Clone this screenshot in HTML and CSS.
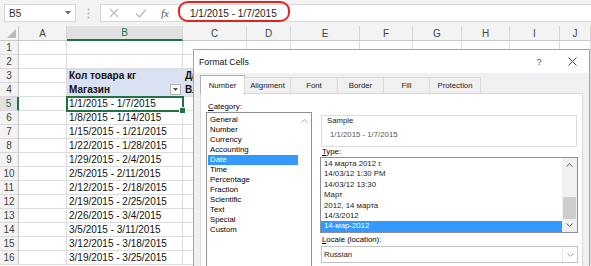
FILE: index.html
```html
<!DOCTYPE html>
<html>
<head>
<meta charset="utf-8">
<link rel="stylesheet" href="styles.css">
</head>
<body>
<div class="fbar">
  <div class="namebox"><span>B5</span><svg class="nb-arrow" width="6" height="4" viewBox="0 0 6 4"><polygon points="0,0 6,0 3,3.5" fill="#666"/></svg></div>
  <div class="vdots"><svg width="3" height="11" viewBox="0 0 3 11"><circle cx="1.5" cy="1.5" r="1" fill="#b4b4b4"/><circle cx="1.5" cy="5.5" r="1" fill="#b4b4b4"/><circle cx="1.5" cy="9.5" r="1" fill="#b4b4b4"/></svg></div>
  <div class="fbox">
    <div class="ficons">
      <svg width="56" height="16" viewBox="0 0 56 16"><path d="M9 4 L17 12 M17 4 L9 12" stroke="#bdbdbd" stroke-width="1.2" fill="none"/><path d="M35 8.5 L38.5 12 L45 4.5" stroke="#bdbdbd" stroke-width="1.2" fill="none"/></svg>
      <span class="fx">fx</span>
    </div>
    <div class="ftext">1/1/2015 - 1/7/2015</div>
  </div>
</div>
<div class="ring"></div>

<div class="sheet">
  <div class="corner"><svg width="9" height="9" viewBox="0 0 9 9"><polygon points="9,0 9,9 0,9" fill="#b9b9b9"/></svg></div>
  <div class="ch">A</div><div class="ch sel">B</div><div class="ch">C</div><div class="ch">D</div><div class="ch">E</div><div class="ch">F</div><div class="ch">G</div><div class="ch">H</div><div class="ch">I</div><div class="ch">J</div>

  <div class="rh">1</div><div class="c"></div><div class="c"></div><div class="c"></div><div class="c"></div><div class="c"></div><div class="c"></div><div class="c"></div><div class="c"></div><div class="c"></div><div class="c"></div>
  <div class="rh">2</div><div class="c"></div><div class="c"></div><div class="c"></div><div class="c"></div><div class="c"></div><div class="c"></div><div class="c"></div><div class="c"></div><div class="c"></div><div class="c"></div>
  <div class="rh">3</div><div class="c"></div><div class="c pv pv-top">Кол товара кг</div><div class="c pv pv-top">Дата</div><div class="c"></div><div class="c"></div><div class="c"></div><div class="c"></div><div class="c"></div><div class="c"></div><div class="c"></div>
  <div class="rh">4</div><div class="c"></div><div class="c pv">Магазин<span class="filter"><svg width="5" height="3" viewBox="0 0 5 3"><polygon points="0,0 5,0 2.5,3" fill="#555"/></svg></span></div><div class="c pv">Вл</div><div class="c"></div><div class="c"></div><div class="c"></div><div class="c"></div><div class="c"></div><div class="c"></div><div class="c"></div>
  <div class="rh sel">5</div><div class="c"></div><div class="c active">1/1/2015 - 1/7/2015</div><div class="c"></div><div class="c"></div><div class="c"></div><div class="c"></div><div class="c"></div><div class="c"></div><div class="c"></div><div class="c"></div>
  <div class="rh">6</div><div class="c"></div><div class="c">1/8/2015 - 1/14/2015</div><div class="c"></div><div class="c"></div><div class="c"></div><div class="c"></div><div class="c"></div><div class="c"></div><div class="c"></div><div class="c"></div>
  <div class="rh">7</div><div class="c"></div><div class="c">1/15/2015 - 1/21/2015</div><div class="c"></div><div class="c"></div><div class="c"></div><div class="c"></div><div class="c"></div><div class="c"></div><div class="c"></div><div class="c"></div>
  <div class="rh">8</div><div class="c"></div><div class="c">1/22/2015 - 1/28/2015</div><div class="c"></div><div class="c"></div><div class="c"></div><div class="c"></div><div class="c"></div><div class="c"></div><div class="c"></div><div class="c"></div>
  <div class="rh">9</div><div class="c"></div><div class="c">1/29/2015 - 2/4/2015</div><div class="c"></div><div class="c"></div><div class="c"></div><div class="c"></div><div class="c"></div><div class="c"></div><div class="c"></div><div class="c"></div>
  <div class="rh">10</div><div class="c"></div><div class="c">2/5/2015 - 2/11/2015</div><div class="c"></div><div class="c"></div><div class="c"></div><div class="c"></div><div class="c"></div><div class="c"></div><div class="c"></div><div class="c"></div>
  <div class="rh">11</div><div class="c"></div><div class="c">2/12/2015 - 2/18/2015</div><div class="c"></div><div class="c"></div><div class="c"></div><div class="c"></div><div class="c"></div><div class="c"></div><div class="c"></div><div class="c"></div>
  <div class="rh">12</div><div class="c"></div><div class="c">2/19/2015 - 2/25/2015</div><div class="c"></div><div class="c"></div><div class="c"></div><div class="c"></div><div class="c"></div><div class="c"></div><div class="c"></div><div class="c"></div>
  <div class="rh">13</div><div class="c"></div><div class="c">2/26/2015 - 3/4/2015</div><div class="c"></div><div class="c"></div><div class="c"></div><div class="c"></div><div class="c"></div><div class="c"></div><div class="c"></div><div class="c"></div>
  <div class="rh">14</div><div class="c"></div><div class="c">3/5/2015 - 3/11/2015</div><div class="c"></div><div class="c"></div><div class="c"></div><div class="c"></div><div class="c"></div><div class="c"></div><div class="c"></div><div class="c"></div>
  <div class="rh">15</div><div class="c"></div><div class="c">3/12/2015 - 3/18/2015</div><div class="c"></div><div class="c"></div><div class="c"></div><div class="c"></div><div class="c"></div><div class="c"></div><div class="c"></div><div class="c"></div>
  <div class="rh">16</div><div class="c"></div><div class="c">3/19/2015 - 3/25/2015</div><div class="c"></div><div class="c"></div><div class="c"></div><div class="c"></div><div class="c"></div><div class="c"></div><div class="c"></div><div class="c"></div>
</div>

<div class="dialog">
  <div class="titlebar">
    <span class="title">Format Cells</span>
    <span class="help">?</span>
    <span class="close"><svg width="9" height="9" viewBox="0 0 9 9"><path d="M0.5 0.5 L8.5 8.5 M8.5 0.5 L0.5 8.5" stroke="#444" stroke-width="1" fill="none"/></svg></span>
  </div>
  <div class="dbody">
    <div class="tabs">
      <div class="tab on" style="width:45px">Number</div>
      <div class="tab" style="width:47px">Alignment</div>
      <div class="tab" style="width:48px">Font</div>
      <div class="tab" style="width:47px">Border</div>
      <div class="tab" style="width:47px">Fill</div>
      <div class="tab" style="width:52px">Protection</div>
    </div>
    <div class="panel">
      <div class="leftcol">
        <div class="lbl"><u>C</u>ategory:</div>
        <div class="catlist">
          <div class="items">
            <div class="it">General</div>
            <div class="it">Number</div>
            <div class="it">Currency</div>
            <div class="it">Accounting</div>
            <div class="it sel">Date</div>
            <div class="it">Time</div>
            <div class="it">Percentage</div>
            <div class="it">Fraction</div>
            <div class="it">Scientific</div>
            <div class="it">Text</div>
            <div class="it">Special</div>
            <div class="it">Custom</div>
          </div>
          <div class="catscroll"><svg width="7" height="4" viewBox="0 0 7 4"><polyline points="0.5,3.5 3.5,0.7 6.5,3.5" stroke="#a8a8a8" stroke-width="1" fill="none"/></svg></div>
        </div>
      </div>
      <div class="rightcol">
        <div class="sample">
          <div class="slbl">Sample</div>
          <div class="sval">1/1/2015 - 1/7/2015</div>
        </div>
        <div class="lbl2"><u>T</u>ype:</div>
        <div class="typelist">
          <div class="titems">
            <div class="ti">14 марта 2012 г.</div>
            <div class="ti">14/03/12 1:30 PM</div>
            <div class="ti">14/03/12 13:30</div>
            <div class="ti">Март</div>
            <div class="ti">2012, 14 марта</div>
            <div class="ti">14/3/2012</div>
            <div class="ti sel">14-мар-2012</div>
          </div>
          <div class="tscroll">
            <div class="sbtn"><svg width="7" height="4" viewBox="0 0 7 4"><polyline points="0.5,3.5 3.5,0.7 6.5,3.5" stroke="#606060" stroke-width="1" fill="none"/></svg></div>
            <div class="track"><div class="thumb"></div></div>
            <div class="sbtn"><svg width="7" height="4" viewBox="0 0 7 4"><polyline points="0.5,0.5 3.5,3.3 6.5,0.5" stroke="#606060" stroke-width="1" fill="none"/></svg></div>
          </div>
        </div>
        <div class="lbl3"><u>L</u>ocale (location):</div>
        <div class="combo">
          <span class="cval">Russian</span>
          <span class="cbtn"><svg width="7" height="4" viewBox="0 0 7 4"><polyline points="0.5,0.5 3.5,3.3 6.5,0.5" stroke="#9a9a9a" stroke-width="1" fill="none"/></svg></span>
        </div>
      </div>
    </div>
  </div>
</div>
</body>
</html>
```

FILE: styles.css
```css
html, body {
  margin: 0;
  padding: 0;
}
body {
  width: 591px;
  height: 266px;
  overflow: hidden;
  position: relative;
  background: #fff;
  font-family: "Liberation Sans", Arial, sans-serif;
}
* { box-sizing: border-box; }

/* formula bar */
.fbar {
  height: 26px;
  background: #f3f3f3;
  display: flex;
  align-items: flex-start;
  padding-top: 4px;
}
.namebox {
  margin-left: 4px;
  width: 72px;
  height: 18px;
  background: #fff;
  border: 1px solid #d8d8d8;
  display: flex;
  align-items: center;
  justify-content: space-between;
  padding: 0 4px 0 4px;
  font-size: 10px;
  color: #333;
}
.vdots {
  width: 24px;
  height: 18px;
  display: flex;
  align-items: center;
  justify-content: center;
}
.fbox {
  flex: 1;
  height: 18px;
  background: #fff;
  border: 1px solid #d8d8d8;
  border-right: none;
  display: flex;
  align-items: center;
}
.ficons {
  width: 77px;
  display: flex;
  align-items: center;
}
.fx {
  font-family: "Liberation Serif", serif;
  font-style: italic;
  font-size: 11px;
  color: #5a5a5a;
  margin-left: 4px;
}
.ftext {
  padding-left: 12px;
  font-size: 10px;
  color: #222;
}
.ring {
  position: absolute;
  left: 178px;
  top: 1px;
  width: 112px;
  height: 21px;
  border: 2px solid #e2231f;
  border-radius: 10px / 9px;
}

/* sheet */
.sheet {
  display: grid;
  grid-template-columns: 19px 48px 116px 64px 44px 69px 53px 49px 48px 50px 31px;
  grid-template-rows: 15px repeat(16, 14px);
}
.corner {
  background: #f3f3f3;
  border-right: 1px solid #c8c8c8;
  border-bottom: 1px solid #c8c8c8;
  display: flex;
  align-items: flex-end;
  justify-content: flex-end;
  padding: 0 2px 2px 0;
}
.ch {
  background: #f3f3f3;
  border-right: 1px solid #d6d6d6;
  border-bottom: 1px solid #c8c8c8;
  font-size: 10px;
  color: #444;
  display: flex;
  align-items: center;
  justify-content: center;
}
.ch.sel {
  background: #e1e1e1;
  color: #217346;
  border-bottom: 2px solid #217346;
}
.rh {
  background: #f3f3f3;
  border-right: 1px solid #c8c8c8;
  border-bottom: 1px solid #dadada;
  font-size: 10px;
  color: #444;
  display: flex;
  align-items: center;
  justify-content: center;
}
.rh.sel {
  background: #e1e1e1;
  color: #217346;
  border-right: 2px solid #217346;
}
.c {
  border-right: 1px solid #dadcdd;
  border-bottom: 1px solid #dadcdd;
  font-size: 10px;
  color: #111;
  display: flex;
  align-items: center;
  padding-left: 2px;
  white-space: nowrap;
  min-width: 0;
}
.pv {
  background: #d9e1f2;
  border-right-color: #d9e1f2;
  font-weight: bold;
}
.pv-top {
  border-bottom-color: #d9e1f2;
}
.filter {
  margin-left: auto;
  margin-right: 1px;
  width: 11px;
  height: 11px;
  border: 1px solid #b5b5b5;
  background: #f7f7f7;
  display: flex;
  align-items: center;
  justify-content: center;
}
.active {
  position: relative;
  z-index: 1;
  outline: 2px solid #217346;
  outline-offset: -1px;
}
.active::after {
  content: "";
  position: absolute;
  right: -4px;
  bottom: -4px;
  width: 5px;
  height: 5px;
  background: #217346;
  border: 1px solid #fff;
}

/* dialog */
.dialog {
  position: absolute;
  left: 193px;
  top: 49px;
  width: 397px;
  height: 240px;
  border: 1px solid #86a9d8;
  background: #f0f0f0;
  font-size: 7.8px;
  color: #000;
  z-index: 5;
  display: flex;
  flex-direction: column;
}
.titlebar {
  height: 23px;
  background: #fff;
  display: flex;
  align-items: center;
  padding-left: 5px;
  padding-right: 3px;
}
.title {
  font-size: 8.8px;
  color: #111;
}
.help {
  margin-left: auto;
  width: 20px;
  text-align: center;
  font-size: 8.5px;
  color: #444;
  margin-right: 9px;
}
.close {
  width: 28px;
  display: flex;
  justify-content: center;
}
.dbody {
  flex: 1;
  padding: 2px 6px 0 6px;
  display: flex;
  flex-direction: column;
}
.tabs {
  display: flex;
  align-items: flex-end;
  height: 18px;
  position: relative;
  z-index: 2;
}
.tab {
  height: 16px;
  border: 1px solid #d9d9d9;
  border-bottom: none;
  margin-right: -1px;
  background: #f0f0f0;
  display: flex;
  align-items: flex-end;
  justify-content: center;
  padding-bottom: 3px;
  line-height: 9px;
  color: #222;
}
.tab.on {
  background: #fff;
  border-color: #adadad;
  margin-bottom: -1px;
  height: 19px;
  padding-bottom: 4px;
}
.panel {
  flex: 1;
  background: #fff;
  border: 1px solid #d9d9d9;
  padding: 7px 0 0 5px;
  display: flex;
  align-items: flex-start;
}
.leftcol {
  width: 106px;
  display: flex;
  flex-direction: column;
}
.lbl {
  height: 11px;
  line-height: 11px;
  padding-left: 2px;
}
.catlist {
  height: 170px;
  border: 1px solid #8c8f94;
  display: flex;
}
.items {
  flex: 1;
  padding: 2px 0 0 1px;
}
.it {
  height: 10px;
  line-height: 10px;
  padding-left: 2px;
}
.it.sel, .ti.sel {
  background: #3399ff;
  color: #fff;
}
.catscroll {
  width: 13px;
  display: flex;
  justify-content: center;
  padding-top: 6px;
}
.rightcol {
  width: 258px;
  margin-left: 8px;
  margin-top: 14px;
  display: flex;
  flex-direction: column;
}
.sample {
  height: 32px;
  margin: 0 1px;
  border: 1px solid #dcdcdc;
  padding: 0 5px;
}
.slbl {
  line-height: 9px;
  color: #222;
}
.sval {
  margin-top: 5px;
  margin-left: 3px;
  line-height: 10px;
  color: #555;
}
.lbl2 {
  height: 10px;
  line-height: 10px;
  padding-left: 2px;
}
.typelist {
  height: 76px;
  border: 1px solid #8c8f94;
  display: flex;
}
.titems {
  flex: 1;
  padding-top: 1px;
}
.ti {
  height: 10.4px;
  line-height: 10.4px;
  padding-left: 3px;
  color: #222;
}
.tscroll {
  width: 15px;
  background: #f0f0f0;
  display: flex;
  flex-direction: column;
}
.sbtn {
  height: 14px;
  display: flex;
  align-items: center;
  justify-content: center;
}
.track {
  flex: 1;
  padding: 25px 1px 0 1px;
}
.thumb {
  height: 22px;
  background: #cdcdcd;
}
.lbl3 {
  margin-top: 1px;
  height: 12px;
  line-height: 12px;
  padding-left: 2px;
}
.combo {
  height: 17px;
  margin-left: 1px;
  border: 1px solid #c4c4c4;
  display: flex;
  align-items: center;
}
.cval {
  flex: 1;
  padding-left: 2px;
  color: #222;
}
.cbtn {
  width: 15px;
  height: 100%;
  border-left: 1px solid #e6e6e6;
  display: flex;
  align-items: center;
  justify-content: center;
}
```
